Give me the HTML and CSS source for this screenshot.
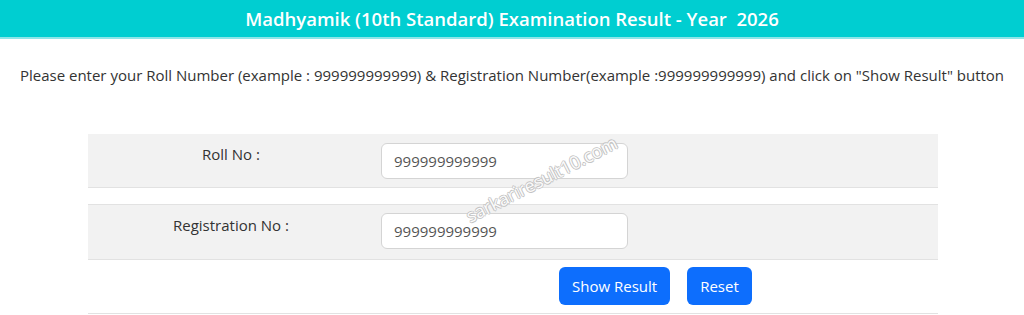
FILE: index.html
```html
<!DOCTYPE html>
<html lang="en">
<head>
<meta charset="utf-8">
<title>Madhyamik Result</title>
<link rel="stylesheet" href="styles.css">
</head>
<body>
<header class="banner"><h1 class="banner-title">Madhyamik (10th Standard) Examination Result - Year&nbsp; 2026</h1></header>
<p class="intro">Please enter your Roll Number (example : 999999999999) &amp; Registration Number(example :999999999999) and click on "Show Result" button</p>
<div class="form-wrap">
  <div class="form">
    <div class="row row-grey row-first">
      <div class="label">Roll No :</div>
      <div class="field"><input class="input" type="text" placeholder="999999999999"></div>
    </div>
    <div class="spacer"></div>
    <div class="row row-grey row-second">
      <div class="label">Registration No :</div>
      <div class="field"><input class="input" type="text" placeholder="999999999999"></div>
    </div>
    <div class="row row-actions">
      <button class="btn" type="button">Show Result</button>
      <button class="btn" type="button">Reset</button>
    </div>
  </div>
  <div class="watermark">sarkariresult10.com</div>
</div>
</body>
</html>
```
FILE: styles.css
```css
* { box-sizing: border-box; }
body {
  margin: 0;
  font-family: "Open Sans", "Noto Sans", sans-serif;
  color: #333;
  background: #fff;
}
.banner {
  background: #00ced1;
  height: 39px;
  border-bottom: 2px solid #8ee6e8;
  display: flex;
  align-items: center;
  justify-content: center;
}
.banner-title {
  margin: 0;
  color: #fff;
  font-size: 18.5px;
  font-weight: 600;
  line-height: 37px;
  white-space: nowrap;
}
.intro {
  margin: 26px 0 0;
  font-size: 15px;
  line-height: 20px;
  text-align: center;
  color: #333;
  white-space: nowrap;
}
.form-wrap {
  position: relative;
  margin: 49px 0 0 88px;
  width: 850px;
}
.row {
  display: flex;
}
.row-grey {
  background: #f2f2f2;
  height: 54px;
}
.row-first { border-bottom: 1px solid #e2e2e2; }
.row-second { border-top: 1px solid #e2e2e2; border-bottom: 1px solid #e2e2e2; height: 56px; }
.spacer { height: 16px; }
.label {
  width: 286px;
  text-align: center;
  font-size: 15px;
  line-height: 20px;
  padding-top: 10px;
  color: #333;
}
.field {
  padding: 9px 0 0 7px;
}
.row-second .field { padding-top: 8px; }
.row-second .label { padding-top: 10px; }
.input {
  width: 247px;
  height: 36px;
  border: 1px solid #d4d4d4;
  border-radius: 6px;
  background: #fff;
  padding: 0 12px;
  font-family: inherit;
  font-size: 15px;
  color: #555;
  outline: none;
}
.input::placeholder { color: #555; opacity: 1; }
.row-actions {
  height: 54px;
  border-bottom: 1px solid #e2e2e2;
  padding: 7px 0 0 471px;
  gap: 17px;
  align-items: flex-start;
}
.btn {
  height: 38px;
  border: none;
  border-radius: 6px;
  background: #0d6efd;
  color: #fff;
  font-family: inherit;
  font-size: 15px;
  padding: 0 13px;
  cursor: pointer;
}
.watermark {
  position: absolute;
  left: 370px;
  top: 33px;
  transform: rotate(-27deg);
  font-size: 18px;
  font-weight: 400;
  color: rgba(255,255,255,0.95);
  text-shadow: -1px 0 0 #c4c4c4, 1px 0 0 #c4c4c4, 0 -1px 0 #c4c4c4, 0 1px 0 #c4c4c4;
  pointer-events: none;
  white-space: nowrap;
}
```
